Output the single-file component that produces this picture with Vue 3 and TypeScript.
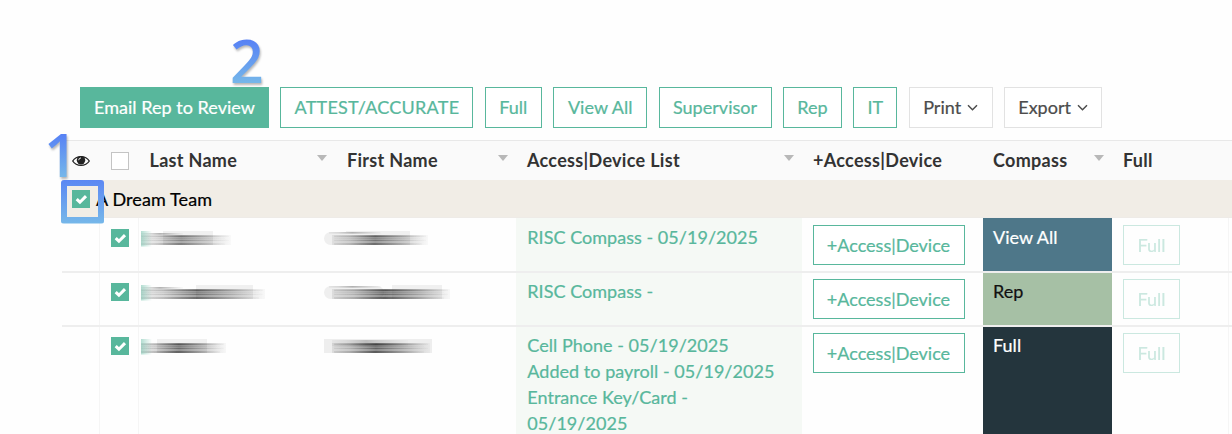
<script setup lang="ts">
interface ToolButton { label: string; width: number; kind: string; menu?: boolean }
interface Smudge { w: number; dark: number; haloX: number; haloW: number; round?: boolean }
interface Row { last: Smudge; first: Smudge; access: string[]; level: string; tone: string }

const buttons: ToolButton[] = [
  { label: 'Email Rep to Review', width: 189, kind: 'solid' },
  { label: 'ATTEST/ACCURATE', width: 193, kind: 'outline caps' },
  { label: 'Full', width: 57, kind: 'outline' },
  { label: 'View All', width: 94, kind: 'outline' },
  { label: 'Supervisor', width: 113, kind: 'outline' },
  { label: 'Rep', width: 59, kind: 'outline' },
  { label: 'IT', width: 44, kind: 'outline' },
  { label: 'Print', width: 84, kind: 'plain', menu: true },
  { label: 'Export', width: 98, kind: 'plain', menu: true },
]

const rows: Row[] = [
  {
    last: { w: 91, dark: 0.6, haloX: 22, haloW: 50 },
    first: { w: 106, dark: 0.72, haloX: 22, haloW: 64, round: true },
    access: ['RISC Compass - 05/19/2025'], level: 'View All', tone: 'blue',
  },
  {
    last: { w: 125, dark: 0.75, haloX: 55, haloW: 57 },
    first: { w: 128, dark: 0.85, haloX: 68, haloW: 50, round: true },
    access: ['RISC Compass -'], level: 'Rep', tone: 'green',
  },
  {
    last: { w: 86, dark: 0.8, haloX: 16, haloW: 50 },
    first: { w: 108, dark: 0.85, haloX: 0, haloW: 80 },
    access: ['Cell Phone - 05/19/2025', 'Added to payroll - 05/19/2025', 'Entrance Key/Card -', '05/19/2025'],
    level: 'Full', tone: 'navy',
  },
]
const stripes = [
  { y: 4.6, h: 1.4, o: 0.75 }, { y: 6.6, h: 1.2, o: 0.35 },
  { y: 8.8, h: 1.2, o: 0.5 }, { y: 12.2, h: 1.6, o: 0.75 },
]
const smudgesOf = (row: Row): Smudge[] => [row.last, row.first]
</script>

<template>
  <div class="page">
    <svg class="defs" width="0" height="0">
      <defs>
        <linearGradient id="smear">
          <stop offset="0" stop-color="#222" stop-opacity=".2" />
          <stop offset=".18" stop-color="#222" stop-opacity=".42" />
          <stop offset=".45" stop-color="#111" stop-opacity="1" />
          <stop offset=".75" stop-color="#222" stop-opacity=".5" />
          <stop offset="1" stop-color="#444" stop-opacity=".08" />
        </linearGradient>
        <linearGradient id="tint">
          <stop offset="0" stop-color="#58b79c" stop-opacity=".45" />
          <stop offset="1" stop-color="#58b79c" stop-opacity="0" />
        </linearGradient>
      </defs>
    </svg>

    <div class="toolbar">
      <button v-for="b in buttons" :key="b.label" class="btn" :class="b.kind" :style="{ width: b.width + 'px' }">
        <span>{{ b.label }}</span>
        <svg v-if="b.menu" class="chev" viewBox="0 0 11 7" width="11" height="7"><path d="M1 1.2 5.5 5.7 10 1.2" /></svg>
      </button>
    </div>

    <div class="table">
      <div class="grid head">
        <div class="cell eye">
          <svg viewBox="0 0 18 12" width="18" height="12">
            <path d="M.7 6C4.4.1 13.6.1 17.3 6 13.6 11.9 4.4 11.9.7 6Z" fill="none" stroke="#222" stroke-width="1.3" />
            <circle cx="9" cy="5.3" r="4.2" fill="#222" />
            <path d="M6.7 5.2A2.4 2.4 0 0 1 9 2.9" fill="none" stroke="#fff" stroke-width=".9" />
          </svg>
        </div>
        <div class="cell pick"><i class="box"></i></div>
        <div class="cell name"><span>Last Name</span><i class="sort"></i></div>
        <div class="cell"><span>First Name</span><i class="sort"></i></div>
        <div class="cell"><span>Access|Device List</span><i class="sort"></i></div>
        <div class="cell"><span>+Access|Device</span></div>
        <div class="cell compass"><span>Compass</span><i class="sort"></i></div>
        <div class="cell"><span>Full</span></div>
      </div>

      <div class="group">
        <span class="check"><svg viewBox="0 0 18 18"><path d="M4.7 9.2 7.9 12.2 14 6.1" /></svg></span>
        <span class="team">A Dream Team</span>
        <div class="frame"></div>
      </div>

      <div v-for="(row, i) in rows" :key="i" class="grid row">
        <div class="cell rule"></div>
        <div class="cell rule pick">
          <span class="check"><svg viewBox="0 0 18 18"><path d="M4.7 9.2 7.9 12.2 14 6.1" /></svg></span>
        </div>
        <div v-for="(s, n) in smudgesOf(row)" :key="n" class="cell smudge" :class="n ? 'given' : 'family'">
          <svg :width="s.w" height="16" :viewBox="`0 0 ${s.w} 16`">
            <rect :x="s.haloX" y="0" :width="s.haloW" height="14" fill="#f0f0f0" />
            <rect v-if="s.round" x="0" y="1" width="60" height="13" rx="6.5" fill="#efefef" />
            <rect v-if="s.round" x="5" y="1.2" width="52" height="1.3" fill="url(#smear)" opacity=".35" />
            <rect v-if="n && !s.round" x="0" y="0" :width="s.w" height="14" fill="#eee" />
            <rect v-if="n && !s.round" x="8" y="1" width="76" height="6" fill="url(#smear)" opacity=".22" />
            <rect v-if="!n && i < 2" x="0" y="2.2" width="42" height="1.4" fill="url(#smear)" opacity=".4" />
            <rect :x="n ? 8 : 0" y="4" :width="s.w - (n ? 10 : 1)" height="10" fill="url(#smear)" :opacity="s.dark * 0.52" />
            <rect
              v-for="(t, k) in stripes" :key="k" :x="n ? 10 : 0" :y="t.y" :width="s.w - (n ? 14 : 3) - (k % 2) * 4"
              :height="t.h" fill="url(#smear)" :opacity="t.o * s.dark * 0.8"
            />
            <rect v-if="!n" x="0" y="0" width="11" height="15.5" fill="url(#tint)" />
          </svg>
        </div>
        <div class="cell access"><div v-for="a in row.access" :key="a">{{ a }}</div></div>
        <div class="cell action"><button class="btn outline small wide">+Access|Device</button></div>
        <div class="cell level" :class="row.tone">{{ row.level }}</div>
        <div class="cell action rule"><button class="btn outline small faded">Full</button></div>
      </div>
    </div>

    <span class="step one">1</span>
    <span class="step two">2</span>
  </div>
</template>

<style>
body { margin: 0; background: #fefefe; }
</style>

<style scoped>
.page {
  position: relative; width: 1232px; height: 434px; overflow: hidden; box-sizing: border-box;
  padding-top: 87px; background: #fefefe; color: #111;
  font: 400 18px/26px Lato, "Liberation Sans", sans-serif;
  letter-spacing: .03px;
  -webkit-text-stroke: .22px currentColor;
}
.defs { position: absolute; }
.toolbar { display: flex; gap: 11.4px; margin-left: 80px; height: 41px; }
.btn {
  box-sizing: border-box; height: 41px; padding: 0 0 2px; flex: none; display: flex; align-items: center;
  justify-content: center; background: #fff; border: 1px solid #58b79c; color: #58b79c;
  font: inherit; letter-spacing: inherit; white-space: nowrap; -webkit-text-stroke: inherit;
}
.solid { background: #58b79c; color: #fff; }
.caps { letter-spacing: .25px; }
.plain { border-color: #e2e2e2; color: #4c4c4c; gap: 6px; }
.chev { fill: none; stroke: #4c4c4c; stroke-width: 1.5; margin-top: 2px; }
.table { margin: 12px 0 0 62px; }
.grid { display: grid; grid-template-columns: 38px 39px 197px 180px 286px 181px 129px 117px 1fr; }
.head {
  height: 41px; box-sizing: border-box; border-top: 1px solid #e8e8e8; background: #fafafa;
  color: #333; font-weight: 700; letter-spacing: .3px; -webkit-text-stroke: 0; padding-bottom: 1px;
}
.head .cell { display: flex; align-items: center; justify-content: space-between; padding: 0 8px 0 11px; }
.head .cell > span { margin-top: -1px; }
.head .eye { padding: 0 0 0 10px; }
.head .name { padding: 0 9px 0 10.5px; }
.head .compass { padding-left: 10px; }
.box { width: 18px; height: 18px; box-sizing: border-box; border: 1px solid #c4c4c4; background: #fff; }
.sort { border: 5px solid transparent; border-top: 6px solid #b8b8b8; border-bottom: 0; margin-bottom: 5px; }
.group {
  position: relative; height: 38px; margin-top: -1px; box-sizing: border-box; background: #f1ede6;
  border-bottom: 1px solid #eeebe7; display: flex; align-items: center; padding-left: 10px; color: #000;
}
.team { margin: 0 0 0 6px; letter-spacing: .1px; }
.frame {
  position: absolute; left: -1.5px; top: 0; width: 43.5px; height: 43.5px; border-radius: 3px; z-index: 2;
  background: linear-gradient(#5b87f3, #76b8e9);
  clip-path: polygon(evenodd, 0 0, 100% 0, 100% 100%, 0 100%, 0 0, 6.5px 6px, 37.5px 6px, 37.5px 37px, 6.5px 37px, 6.5px 6px);
}
.row { --drop: 0px; height: 54px; box-sizing: border-box; border-bottom: 2px solid #eee; }
.group + .row { --drop: 1px; height: 55px; }
.row:last-child { height: 110px; }
.cell { box-sizing: border-box; min-width: 0; }
.rule { border-right: 1px solid #f5f5f5; }
.row .pick { padding: calc(10px + var(--drop)) 0 0 11px; }
.head .pick { padding: 0 0 0 10.5px; }
.check { display: block; width: 18px; height: 18px; background: #58b79c; flex: none; }
.check svg { display: block; width: 18px; height: 18px; fill: none; stroke: #fff; stroke-width: 3; }
.smudge { padding-top: calc(12px + var(--drop)); }
.smudge svg { display: block; filter: blur(.45px); }
.family { padding-left: 1.5px; }
.given svg { margin-left: -12px; }
.access { background: #f5f9f5; color: #58b79c; padding: calc(5px + var(--drop)) 0 0 11.3px; white-space: nowrap; }
.action { padding: calc(6px + var(--drop)) 0 0 11px; }
.small { height: 40px; padding-bottom: 0; }
.wide { width: 152px; margin-left: -.5px; letter-spacing: 0; }
.faded { width: 57px; opacity: .3; }
.level { padding: calc(5px + var(--drop)) 0 0 10px; color: #fff; }
.blue { background: #4e7789; }
.green { background: #a6c0a5; color: #111; }
.navy { background: #24353d; }
.step {
  position: absolute; font: 600 59px/80px "Open Sans", "Noto Sans", sans-serif;
  background: linear-gradient(#5680f5 24%, #76b8e9 80%); background-clip: text; -webkit-background-clip: text;
  color: transparent; -webkit-text-stroke: 0; filter: drop-shadow(1px 2px 1px rgba(0, 0, 0, .28));
}
.one { left: 44px; top: 114px; }
.two { left: 230px; top: 20px; }
</style>
